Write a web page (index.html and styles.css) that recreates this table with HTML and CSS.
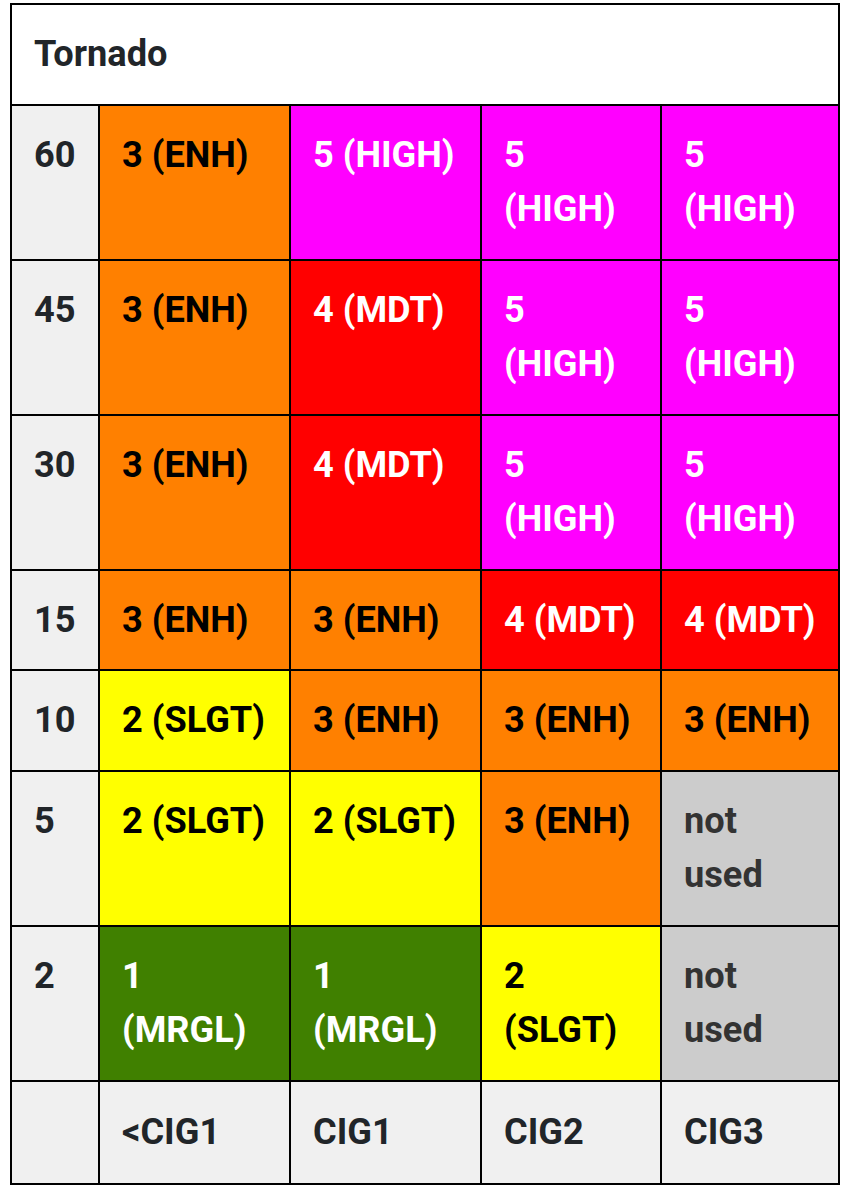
FILE: index.html
```html
<!DOCTYPE html>
<html>
<head>
<meta charset="utf-8">
<link rel="stylesheet" href="styles.css">
</head>
<body>
<div class="grid">
  <div class="cell title">Tornado</div>

  <div class="cell label">60</div>
  <div class="cell enh">3 (ENH)</div>
  <div class="cell high">5 (HIGH)</div>
  <div class="cell high">5 (HIGH)</div>
  <div class="cell high">5 (HIGH)</div>

  <div class="cell label">45</div>
  <div class="cell enh">3 (ENH)</div>
  <div class="cell mdt">4 (MDT)</div>
  <div class="cell high">5 (HIGH)</div>
  <div class="cell high">5 (HIGH)</div>

  <div class="cell label">30</div>
  <div class="cell enh">3 (ENH)</div>
  <div class="cell mdt">4 (MDT)</div>
  <div class="cell high">5 (HIGH)</div>
  <div class="cell high">5 (HIGH)</div>

  <div class="cell label">15</div>
  <div class="cell enh">3 (ENH)</div>
  <div class="cell enh">3 (ENH)</div>
  <div class="cell mdt">4 (MDT)</div>
  <div class="cell mdt nowrap">4 (MDT)</div>

  <div class="cell label">10</div>
  <div class="cell slgt">2 (SLGT)</div>
  <div class="cell enh">3 (ENH)</div>
  <div class="cell enh">3 (ENH)</div>
  <div class="cell enh nowrap">3 (ENH)</div>

  <div class="cell label">5</div>
  <div class="cell slgt">2 (SLGT)</div>
  <div class="cell slgt">2 (SLGT)</div>
  <div class="cell enh">3 (ENH)</div>
  <div class="cell unused">not used</div>

  <div class="cell label">2</div>
  <div class="cell mrgl">1 (MRGL)</div>
  <div class="cell mrgl">1 (MRGL)</div>
  <div class="cell slgt">2 (SLGT)</div>
  <div class="cell unused">not used</div>

  <div class="cell label foot"></div>
  <div class="cell label foot">&lt;CIG1</div>
  <div class="cell label foot">CIG1</div>
  <div class="cell label foot">CIG2</div>
  <div class="cell label foot">CIG3</div>
</div>
</body>
</html>
```

FILE: styles.css
```css
html, body {
  margin: 0;
  padding: 0;
  background: #ffffff;
}

body {
  padding: 3px 5px 0 10px;
  font-family: Roboto, "Liberation Sans", Arial, sans-serif;
}

.grid {
  display: grid;
  grid-template-columns: 86px 189px 189px 178px 176px;
  gap: 2px;
  width: 830px;
  box-sizing: border-box;
  border: 2px solid #000;
  background: #000;
}

.cell {
  padding: 22px;
  font-size: 36.2px;
  line-height: 54.5px;
  font-weight: 700;
}

.nowrap {
  white-space: nowrap;
}

.foot {
  padding-top: 23px;
  padding-bottom: 24px;
}

.title {
  grid-column: 1 / -1;
  background: #ffffff;
  color: #212529;
}

.label {
  background: #f0f0f0;
  color: #212529;
}

.enh {
  background: #ff8000;
  color: #000000;
}

.high {
  background: #ff00ff;
  color: #ffffff;
}

.mdt {
  background: #ff0000;
  color: #ffffff;
}

.slgt {
  background: #ffff00;
  color: #000000;
}

.mrgl {
  background: #408000;
  color: #ffffff;
}

.unused {
  background: #cccccc;
  color: #333333;
}
```
